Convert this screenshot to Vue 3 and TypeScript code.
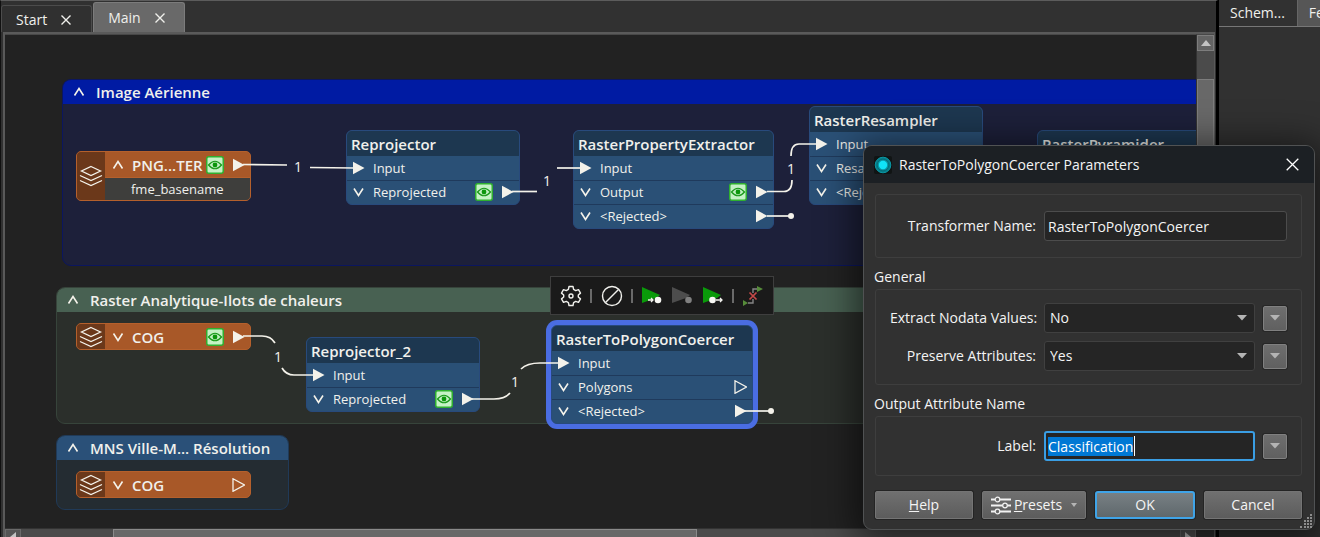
<script setup lang="ts">
import { onMounted, ref } from 'vue'

type PortKind = 'input' | 'output' | 'open'
interface Port { label: string; kind: PortKind; inspect?: boolean; arrow?: boolean }
interface Transformer { title: string; x: number; y: number; w: number; selected?: boolean; ports: Port[] }
interface Bookmark { title: string; tone: string; x: number; y: number; w: number; h: number }
interface Reader { title: string; x: number; y: number; feature?: string; connected: boolean }
interface Count { x: number; y: number }

const view = { x: 5, y: 35 }
const at = (x: number, y: number) => ({ left: `${x - view.x}px`, top: `${y - view.y}px` })
const box = (b: Bookmark) => ({ ...at(b.x, b.y), width: `${b.w}px`, height: `${b.h}px` })

const bookmarks: Bookmark[] = [
  { title: 'Image Aérienne', tone: 'blue', x: 62, y: 79, w: 1300, h: 187 },
  { title: 'Raster Analytique-Ilots de chaleurs', tone: 'green', x: 56, y: 287, w: 1000, h: 137 },
  { title: 'MNS Ville-M... Résolution', tone: 'steel', x: 56, y: 435, w: 233, h: 75 },
]
const readers: Reader[] = [
  { title: 'PNG...TER', x: 76, y: 151, feature: 'fme_basename', connected: true },
  { title: 'COG', x: 76, y: 323, connected: true },
  { title: 'COG', x: 76, y: 471, connected: false },
]
const transformers: Transformer[] = [
  { title: 'Reprojector', x: 346, y: 130, w: 174, ports: [
    { label: 'Input', kind: 'input' }, { label: 'Reprojected', kind: 'output', inspect: true, arrow: true }] },
  { title: 'RasterPropertyExtractor', x: 573, y: 130, w: 201, ports: [
    { label: 'Input', kind: 'input' }, { label: 'Output', kind: 'output', inspect: true, arrow: true },
    { label: '<Rejected>', kind: 'output', arrow: true }] },
  { title: 'RasterResampler', x: 809, y: 106, w: 174, ports: [
    { label: 'Input', kind: 'input' }, { label: 'Resampled', kind: 'output' }, { label: '<Rejected>', kind: 'output' }] },
  { title: 'RasterPyramider', x: 1037, y: 130, w: 174, ports: [
    { label: 'Input', kind: 'input' }, { label: 'Output', kind: 'output' }] },
  { title: 'Reprojector_2', x: 306, y: 337, w: 174, ports: [
    { label: 'Input', kind: 'input' }, { label: 'Reprojected', kind: 'output', inspect: true, arrow: true }] },
  { title: 'RasterToPolygonCoercer', x: 551, y: 325, w: 202, selected: true, ports: [
    { label: 'Input', kind: 'input' }, { label: 'Polygons', kind: 'open' }, { label: '<Rejected>', kind: 'output', arrow: true }] },
]
const wires: string[] = [
  'M243 164.500 L287 165', 'M310 167.500 L354 168',
  'M512 191.500 H537', 'M557 168 H580',
  'M767 191.500 H784 Q792 191.500 792 180', 'M791 156 Q791 144 799 144 H817',
  'M767 216 H790',
  'M243 336 H262 Q271 336 275 343', 'M282 368 Q286 375 294 375 H314',
  'M472 399 H494 Q505 399 510 393', 'M521 369 Q527 363 540 363 H558',
  'M744 411 H771',
]
const counts: Count[] = [{ x: 298, y: 167 }, { x: 547, y: 181 }, { x: 791, y: 169 }, { x: 278, y: 357 }, { x: 515, y: 382 }]

const name = ref('RasterToPolygonCoercer')
const nodata = ref('No')
const preserve = ref('Yes')
const label = ref('Classification')
const labelField = ref<HTMLInputElement | null>(null)

onMounted(() => {
  labelField.value?.focus()
  labelField.value?.select()
})
</script>

<template>
  <div class="app">
    <main class="editor">
      <nav class="tabs" aria-label="Workspaces">
        <div class="tab">
          <button class="tab-name">Start</button>
          <button class="tab-close" aria-label="Close Start"><svg width="10" height="10" viewBox="0 0 10 10"><path d="M.5.5l9 9M9.500.5l-9 9" /></svg></button>
        </div>
        <div class="tab active">
          <button class="tab-name">Main</button>
          <button class="tab-close" aria-label="Close Main"><svg width="10" height="10" viewBox="0 0 10 10"><path d="M.5.5l9 9M9.500.5l-9 9" /></svg></button>
        </div>
      </nav>
      <div class="workspace">
        <div class="canvas">
          <section v-for="b in bookmarks" :key="b.title" class="bookmark" :class="b.tone" :style="box(b)">
            <header>
              <svg width="12" height="12" viewBox="0 0 12 12" class="chev"><path d="M1.500 9.500L6 2.500l4.500 7" /></svg>
              <h2>{{ b.title }}</h2>
            </header>
          </section>

          <article v-for="(r, i) in readers" :key="'r' + i" class="reader" :style="at(r.x, r.y)">
            <div class="reader-icon">
              <svg width="24" height="22" viewBox="0 0 24 22">
                <path d="M12 1.500L21.500 6 12 10.500 2.500 6z" /><path d="M1 10.500l11 5 11-5M1 15.500l11 5 11-5" />
              </svg>
            </div>
            <div class="reader-main">
              <div class="reader-head">
                <svg width="12" height="12" viewBox="0 0 12 12" class="chev">
                  <path :d="r.feature ? 'M1.5 9.5L6 2.500l4.500 7' : 'M1.5 2.500L6 9.500l4.500-7'" />
                </svg>
                <h3>{{ r.title }}</h3>
                <svg v-if="r.connected" class="eye" width="18" height="18" viewBox="0 0 18 18">
                  <rect x=".75" y=".75" width="16.500" height="16.500" rx="2" /><path d="M2.500 9Q9 1.500 15.500 9 9 16.500 2.500 9z" /><circle cx="9" cy="9" r="2.400" />
                </svg>
                <svg class="port" :class="{ open: !r.connected }" width="13" height="14" viewBox="0 0 13 14"><path d="M1 .7L12.500 7 1 13.300z" /></svg>
              </div>
              <p v-if="r.feature">{{ r.feature }}</p>
            </div>
          </article>

          <article v-for="t in transformers" :key="t.title" class="node" :class="{ selected: t.selected }" :style="{ ...at(t.x, t.y), width: `${t.w}px` }">
            <h3>{{ t.title }}</h3>
            <ul>
              <li v-for="p in t.ports" :key="p.label">
                <svg v-if="p.kind === 'input'" class="port" width="13" height="14" viewBox="0 0 13 14"><path d="M1 .7L12.500 7 1 13.300z" /></svg>
                <svg v-else width="13" height="12" viewBox="0 0 12 12" class="chev"><path d="M1.500 2.500L6 9.500l4.500-7" /></svg>
                <span>{{ p.label }}</span>
                <svg v-if="p.inspect" class="eye" width="18" height="18" viewBox="0 0 18 18">
                  <rect x=".75" y=".75" width="16.500" height="16.500" rx="2" /><path d="M2.500 9Q9 1.500 15.500 9 9 16.500 2.500 9z" /><circle cx="9" cy="9" r="2.400" />
                </svg>
                <svg v-if="p.arrow || p.kind === 'open'" class="port" :class="{ open: p.kind === 'open' }" width="13" height="14" viewBox="0 0 13 14"><path d="M1 .7L12.500 7 1 13.300z" /></svg>
              </li>
            </ul>
          </article>

          <svg class="wires" width="100%" height="100%">
            <g :transform="`translate(${-view.x} ${-view.y})`">
              <path v-for="d in wires" :key="d" :d="d" />
              <circle cx="791" cy="216" r="3" /><circle cx="771" cy="411" r="3" />
              <text v-for="c in counts" :key="c.x" :x="c.x" :y="c.y + 5" text-anchor="middle">1</text>
            </g>
          </svg>

          <div class="toolbar" :style="at(550, 276)">
            <button aria-label="Parameters">
              <svg width="22" height="22" viewBox="0 0 22 22" class="line">
                <path d="M9 1.500h4l.6 2.900 2.100 1.200 2.800-1 2 3.500-2.200 1.900v2l2.200 1.900-2 3.500-2.800-1-2.100 1.200-.6 2.900H9l-.6-2.900-2.100-1.200-2.800 1-2-3.500L3.700 12v-2L1.500 8.100l2-3.500 2.800 1 2.100-1.200z" /><circle cx="11" cy="11" r="2" />
              </svg>
            </button>
            <i></i>
            <button aria-label="Disable">
              <svg width="22" height="22" viewBox="0 0 22 22" class="line"><circle cx="11" cy="11" r="9.500" /><path d="M17.500 4.500l-13 13" /></svg>
            </button>
            <i></i>
            <button aria-label="Run to this">
              <svg width="22" height="20" viewBox="0 0 22 20"><path d="M1 1l18 8-4 3-14 5z" fill="#0a9a0a" /><path d="M7 14h5M10 12l2 2-2 2" stroke="#f2f2ee" stroke-width="1.300" fill="none" /><circle cx="17" cy="14" r="3.300" fill="#f8f8f4" /></svg>
            </button>
            <button aria-label="Run just this" disabled>
              <svg width="22" height="20" viewBox="0 0 22 20"><path d="M1 1l18 8-4 3-14 5z" fill="#4d4d4d" /><circle cx="17.500" cy="14" r="3.300" fill="#808080" /></svg>
            </button>
            <button aria-label="Run from this">
              <svg width="22" height="20" viewBox="0 0 22 20"><path d="M1 1l18 8-4 3-14 5z" fill="#0a9a0a" /><circle cx="10.500" cy="14" r="3.300" fill="#f8f8f4" /><path d="M14 14h6M18 12l2 2-2 2" stroke="#f2f2ee" stroke-width="1.300" fill="none" /></svg>
            </button>
            <i></i>
            <button aria-label="Disconnect">
              <svg width="22" height="22" viewBox="0 0 22 22"><path d="M6 18h5v-4M11 8V4h5" stroke="#858585" stroke-width="1.400" fill="none" /><path d="M15 1l6 3-6 3zM1 15l5 3-5 3z" fill="#568c3a" /><path d="M7.500 7.500l7 7M14.500 7.500l-7 7" stroke="#c54a48" stroke-width="1.700" /></svg>
            </button>
          </div>
        </div>
        <div class="vbar">
          <button aria-label="Scroll up"><svg width="10" height="6" viewBox="0 0 10 6"><path d="M0 6l5-6 5 6z" /></svg></button>
          <div class="thumb"></div>
        </div>
        <div class="hbar">
          <button aria-label="Scroll left"><svg width="6" height="10" viewBox="0 0 6 10"><path d="M6 0L0 5l6 5z" /></svg></button>
          <div class="thumb"></div>
          <button aria-label="Scroll right"><svg width="6" height="10" viewBox="0 0 6 10"><path d="M0 0l6 5-6 5z" /></svg></button>
        </div>
      </div>
    </main>

    <aside class="side">
      <nav aria-label="Panels"><button>Schem...</button><button class="on">Feature</button></nav>
    </aside>

    <form class="dialog" role="dialog" aria-labelledby="dlg-title" @submit.prevent>
      <header class="titlebar">
        <svg width="18" height="18" viewBox="0 0 18 18">
          <rect width="18" height="18" rx="2" fill="#101414" /><circle cx="9" cy="9" r="7.800" fill="#067e8a" stroke="#0a98a6" /><circle cx="9" cy="9" r="5.800" fill="#0897a4" stroke="#056872" stroke-width=".8" /><circle cx="9" cy="9" r="4.200" fill="#10e4f8" />
        </svg>
        <h1 id="dlg-title">RasterToPolygonCoercer Parameters</h1>
        <button type="button" aria-label="Close"><svg width="13" height="13" viewBox="0 0 13 13"><path d="M.7.7l11.600 11.600M12.300.7L.7 12.300" /></svg></button>
      </header>
      <div class="body">
        <section class="group">
          <div class="field wide">
            <label for="f-name">Transformer Name:</label>
            <input id="f-name" v-model="name" type="text" />
          </div>
        </section>
        <h2>General</h2>
        <section class="group">
          <div class="field">
            <label for="f-nodata">Extract Nodata Values:</label>
            <div class="select">
              <select id="f-nodata" v-model="nodata"><option>No</option><option>Yes</option></select>
              <svg width="10" height="6" viewBox="0 0 10 6"><path d="M0 0h10L5 5.500z" /></svg>
            </div>
            <button type="button" class="more" aria-label="Extract Nodata Values options"><svg width="10" height="6" viewBox="0 0 10 6"><path d="M0 0h10L5 5.500z" /></svg></button>
          </div>
          <div class="field">
            <label for="f-preserve">Preserve Attributes:</label>
            <div class="select">
              <select id="f-preserve" v-model="preserve"><option>Yes</option><option>No</option></select>
              <svg width="10" height="6" viewBox="0 0 10 6"><path d="M0 0h10L5 5.500z" /></svg>
            </div>
            <button type="button" class="more" aria-label="Preserve Attributes options"><svg width="10" height="6" viewBox="0 0 10 6"><path d="M0 0h10L5 5.500z" /></svg></button>
          </div>
        </section>
        <h2>Output Attribute Name</h2>
        <section class="group last">
          <div class="field">
            <label for="f-label">Label:</label>
            <div class="entry">
              <input id="f-label" ref="labelField" v-model="label" type="text" />
              <span class="caret"></span>
            </div>
            <button type="button" class="more" aria-label="Label options"><svg width="10" height="6" viewBox="0 0 10 6"><path d="M0 0h10L5 5.500z" /></svg></button>
          </div>
        </section>
        <footer>
          <button type="button"><span><u>H</u>elp</span></button>
          <button type="button" class="presets">
            <svg width="20" height="19" viewBox="0 0 20 19"><path d="M0 3.500h20M0 9.500h20M0 15.500h20" /><circle cx="6.500" cy="3.500" r="2.300" /><circle cx="14" cy="9.500" r="2.300" /><circle cx="6.500" cy="15.500" r="2.300" /></svg>
            <span><u>P</u>resets</span>
            <svg class="tri" width="6" height="4" viewBox="0 0 6 4"><path d="M0 0h6L3 4z" /></svg>
          </button>
          <button type="submit" class="ok">OK</button>
          <button type="button">Cancel</button>
        </footer>
      </div>
      <svg class="grip" width="14" height="14" viewBox="0 0 14 14"><path d="M11 1h2M11 4h2M8 4h2M11 7h2M8 7h2M5 7h2M11 10h2M8 10h2M5 10h2M11 13h2M8 13h2M5 13h2M1 13h2" /></svg>
    </form>
  </div>
</template>

<style>
body { margin: 0; background: #313131; }
</style>

<style scoped>
* { box-sizing: border-box; margin: 0; padding: 0; }
.app { position: relative; display: grid; grid-template-columns: minmax(0, 1fr) 102px; height: 100vh; overflow: hidden; background: #313131; color: #f0f0ec; font: 14px/20px "Open Sans", "Noto Sans", sans-serif; }
button, input, select { font: inherit; color: inherit; border: 0; background: none; }
h1, h2, h3 { font-size: 14px; font-weight: 400; }
svg { flex: none; display: block; }

.editor { display: flex; flex-direction: column; min-width: 0; border-top: 1px solid #5c5c5c; border-left: 1px solid #111; border-right: 2px solid #000; }
.tabs { display: flex; align-items: flex-end; height: 31px; gap: 1px; }
.tab { display: flex; align-items: center; gap: 14px; height: 27px; padding: 2px 20px 0 14px; background: #303030; border: 1px solid #4c4c4c; border-bottom: 0; border-radius: 3px 3px 0 0; }
.tab.active { height: 30px; padding: 0 19px 0 14px; background: #696969; border-color: #7c7c7c; }
.tab-close path { stroke: #f0f0ec; stroke-width: 1.400; fill: none; }
.workspace { flex: 1; min-height: 0; display: grid; grid-template: minmax(0, 1fr) 9px / minmax(0, 1fr) 18px; margin: 0 1px 0 2px; border: 2px solid #5a5a5a; border-width: 2px 1px 0 2px; }
.canvas { position: relative; overflow: hidden; background: #222; border-top: 1px solid #484848; }

.bookmark { position: absolute; border-radius: 9px; border: 1px solid; overflow: hidden; }
.bookmark header { display: flex; align-items: center; gap: 11px; height: 24px; padding: 0 10px; }
.bookmark h2, .reader h3, .node h3 { font-size: 15px; font-weight: 600; white-space: nowrap; }
.blue { background: #1d203a; border-color: #0b1660; }
.blue header { background: #001ba3; }
.green { background: #2b2f2b; border-color: #37443b; }
.green header { background: #486152; }
.steel { background: #242c32; border-color: #203a58; }
.steel header { background: #2a5078; }
.chev path { fill: none; stroke: #f4f2ea; stroke-width: 1.600; }

.reader { position: absolute; display: flex; width: 175px; background: #a85828; border: 1px solid #b5602c; border-radius: 5px; overflow: hidden; }
.reader-icon { display: grid; place-items: center; width: 28px; background: #6b381a; }
.reader-icon path { fill: none; stroke: #f4f2ea; stroke-width: 1.300; }
.reader-main { flex: 1; min-width: 0; }
.reader-head { display: flex; align-items: center; gap: 8px; height: 25px; padding: 0 5px 0 7px; }
.reader h3 { flex: 1; min-width: 0; white-space: nowrap; }
.reader p { height: 23px; padding-left: 26px; font-size: 13px; line-height: 22px; background: #3e3e3c; border-top: 1px solid #b5602c; }
.eye rect { fill: #c5f2c5; stroke: #2fb02f; stroke-width: 1.500; }
.eye path { fill: none; stroke: #1c9a1c; stroke-width: 1.200; }
.eye circle { fill: #0b960b; }
.port path { fill: #f4f2ea; }
.port.open path { fill: none; stroke: #f4f2ea; stroke-width: 1.300; }

.node { position: absolute; background: #2a5076; border: 1px solid #284a7c; border-radius: 6px; overflow: hidden; }
.node h3 { height: 25px; padding: 0 4px; line-height: 27px; background: #1d3750; }
.node ul { list-style: none; }
.node li { display: flex; align-items: center; gap: 8px; height: 24px; padding: 0 5px; font-size: 13px; }
.node li + li { box-shadow: inset 0 1px #1f3a5c; }
.node li span { flex: 1; }
.node.selected { box-shadow: 0 0 0 5px #4a6de2; }
.wires { position: absolute; inset: 0; }
.wires path { fill: none; stroke: #f4f2ea; stroke-width: 1.700; }
.wires circle, .wires text { fill: #f4f2ea; }

.toolbar { position: absolute; display: flex; align-items: center; width: 224px; height: 39px; padding: 0 9px; justify-content: space-between; background: #1a1a1a; border: 1px solid #3e3e3e; }
.toolbar i { width: 2px; height: 14px; background: #6a6a6a; }
.line { fill: none; stroke: #f0f0ec; stroke-width: 1.400; stroke-linejoin: round; }

.vbar { display: flex; flex-direction: column; gap: 28px; background: #4b4b4b; border-left: 1px solid #333; border-top: 1px solid #484848; }
.vbar button { display: grid; place-items: center; height: 16px; background: #646464; border: 1px solid #7d7d7d; }
.vbar path, .hbar path { fill: #c4c4c4; }
.vbar .thumb { flex: 1; background: #686868; border: 1px solid #7d7d7d; }
.hbar { grid-column: 1 / 2; display: flex; align-items: flex-start; overflow: hidden; background: #4b4b4b; border-top: 1px solid #333; }
.hbar button { display: grid; place-items: center; width: 16px; height: 16px; background: #555; border: 1px solid #6a6a6a; }
.hbar .thumb { width: 49%; height: 16px; margin: 0 auto 0 92px; background: #686868; border: 1px solid #8a8a8a; }

.side { border-left: 1px solid #000; overflow: hidden; }
.side nav { display: flex; height: 27px; border-bottom: 1px solid #777; }
.side button { flex: none; padding: 0 12px 0 11px; }
.side .on { background: #565656; border-left: 1px solid #666; }

.dialog { position: absolute; right: 5px; top: 145px; width: 452px; background: #313131; border: 1px solid #505253; border-radius: 9px; box-shadow: 0 6px 36px 8px rgba(0, 0, 0, .55); color: #f4f4f4; }
.titlebar { display: flex; align-items: center; gap: 7px; height: 37px; padding: 0 15px 0 10px; background: #1c2024; border-radius: 8px 8px 0 0; }
.titlebar h1 { flex: 1; }
.titlebar path { stroke: #fff; stroke-width: 1.300; }
.body { padding: 11px 12px 10px 11px; }
.body h2 { height: 31px; margin-left: -1px; line-height: 38px; }
.group { display: grid; gap: 8px; padding: 13px 14px; border: 1px solid #3e3e3e; border-radius: 3px; }
.group:first-child { padding: 16px 14px; }
.group.last { padding: 14px; }
.field { display: grid; grid-template-columns: minmax(0, 1fr) 211px 24px; column-gap: 8px; align-items: center; }
.field.wide { grid-template-columns: minmax(0, 1fr) 243px; }
.field label { text-align: right; white-space: nowrap; }
.field input, .select select { display: block; width: 100%; height: 30px; padding: 0 3px; background: #252525; border: 1px solid #4c4c4c; border-radius: 3px; outline: 0; }
.field input:focus { border: 2px solid #3a9ee4; padding: 0 2px; }
.field input::selection { background: #0078d4; color: #fff; }
.entry { position: relative; }
.caret { position: absolute; left: 90px; top: 5px; width: 1px; height: 20px; background: #fff; }
.select { position: relative; }
.select select { appearance: none; padding: 0 5px; border-color: #404040; }
.select svg { position: absolute; right: 8px; top: 12px; pointer-events: none; }
.select path, .more path, .tri path { fill: #b4b4b4; }
.more { display: grid; place-items: center; height: 25px; background: linear-gradient(#6e6e6e, #606060); border: 1px solid #808080; border-radius: 2px; box-shadow: 0 0 0 1px #262626; }
footer { display: grid; grid-template-columns: 98fr 104fr 100fr 98fr; gap: 9px; margin-top: 15px; }
footer button { display: flex; align-items: center; justify-content: center; height: 28px; background: linear-gradient(#707070, #5c5c5c); border: 1px solid #747474; border-radius: 2px; box-shadow: 0 0 0 1px #242424; }
footer .ok { background: linear-gradient(#788084, #5f686c); border: 2px solid #3fa4e8; border-radius: 3px; }
.presets { gap: 3px; }
.presets path { stroke: #f2f2f2; stroke-width: 2.200; }
.presets circle { fill: #666; stroke: #f2f2f2; stroke-width: 1.200; }
.presets .tri { margin-left: 6px; }
.presets .tri path { stroke: none; }
.grip { position: absolute; right: 1px; bottom: 1px; }
.grip path { stroke: #8c8c8c; stroke-width: 2; }
</style>
